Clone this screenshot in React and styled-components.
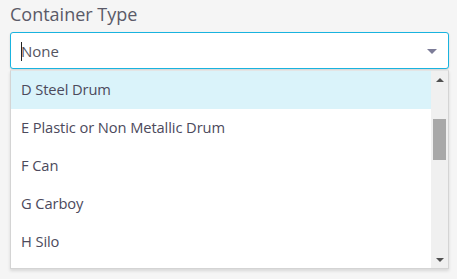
import React from "react";
import styled, { createGlobalStyle } from "styled-components";

const Global = createGlobalStyle`
  html, body { margin: 0; padding: 0; background: #f5f5f5; }
  body { font-family: "Open Sans", "Noto Sans", sans-serif; }
`;

const Page = styled.div`
  width: 457px;
  height: 279px;
  padding: 3px 8px 0 10px;
  box-sizing: border-box;
  display: flex;
  flex-direction: column;
`;

const Label = styled.div`
  font-size: 18px;
  color: #5a5a68;
  line-height: 22px;
  height: 29px;
  letter-spacing: 0px;
`;

const Field = styled.div`
  position: relative;
  width: 439px;
`;

const Input = styled.div`
  height: 37px;
  box-sizing: border-box;
  border: 1px solid #19b3df;
  border-radius: 3px;
  background: #fff;
  display: flex;
  align-items: center;
  padding: 0 11px 0 10px;
  box-shadow: 0 1px 2px rgba(0, 0, 0, 0.15);
`;

const Value = styled.span`
  flex: 1;
  font-size: 15px;
  color: #55555f;
  position: relative;
  &::before {
    content: "";
    position: absolute;
    left: 0;
    top: 1px;
    width: 1px;
    height: 19px;
    background: #222;
  }
`;

const Arrow = styled.span`
  width: 0;
  height: 0;
  border-left: 5px solid transparent;
  border-right: 5px solid transparent;
  border-top: 5px solid #7c7c98;
  margin-top: 2px;
`;

const Menu = styled.div`
  position: absolute;
  left: 0;
  top: 38px;
  width: 439px;
  height: 199px;
  box-sizing: border-box;
  background: #fff;
  border: 1px solid #d4d4d4;
  border-top-color: #e4e4e4;
  box-shadow: 0 2px 3px rgba(0, 0, 0, 0.12);
  display: flex;
  overflow: hidden;
`;

const List = styled.ul`
  list-style: none;
  margin: 0;
  padding: 0;
  flex: 1;
  overflow: hidden;
`;

const Item = styled.li`
  height: 38px;
  display: flex;
  align-items: center;
  padding-left: 10px;
  padding-bottom: 2px;
  box-sizing: border-box;
  font-size: 14.7px;
  letter-spacing: -0.1px;
  color: #4c4a5c;
  background: ${(p) => (p.$active ? "#daf3fa" : "#fff")};
`;

const Scrollbar = styled.div`
  width: 17px;
  background: #f0f0f0;
  display: flex;
  flex-direction: column;
  align-items: center;
`;

const ScrollButton = styled.div`
  height: 17px;
  width: 17px;
  display: flex;
  align-items: center;
  justify-content: center;
  &::after {
    content: "";
    width: 0;
    height: 0;
    border-left: 4px solid transparent;
    border-right: 4px solid transparent;
    ${(p) =>
      p.$down
        ? "border-top: 4px solid #505050;"
        : "border-bottom: 4px solid #505050;"}
  }
`;

const Track = styled.div`
  flex: 1;
  width: 100%;
  display: flex;
  justify-content: center;
  padding-top: 31px;
  box-sizing: border-box;
`;

const Thumb = styled.div`
  width: 13px;
  height: 41px;
  background: #a8a8a8;
`;

const items = [
  "D Steel Drum",
  "E Plastic or Non Metallic Drum",
  "F Can",
  "G Carboy",
  "H Silo",
];

export default function App() {
  return (
    <>
      <Global />
      <Page>
        <Label>Container Type</Label>
        <Field>
          <Input>
            <Value>None</Value>
            <Arrow />
          </Input>
          <Menu>
            <List>
              {items.map((t, i) => (
                <Item key={t} $active={i === 0}>
                  {t}
                </Item>
              ))}
            </List>
            <Scrollbar>
              <ScrollButton />
              <Track>
                <Thumb />
              </Track>
              <ScrollButton $down />
            </Scrollbar>
          </Menu>
        </Field>
      </Page>
    </>
  );
}
